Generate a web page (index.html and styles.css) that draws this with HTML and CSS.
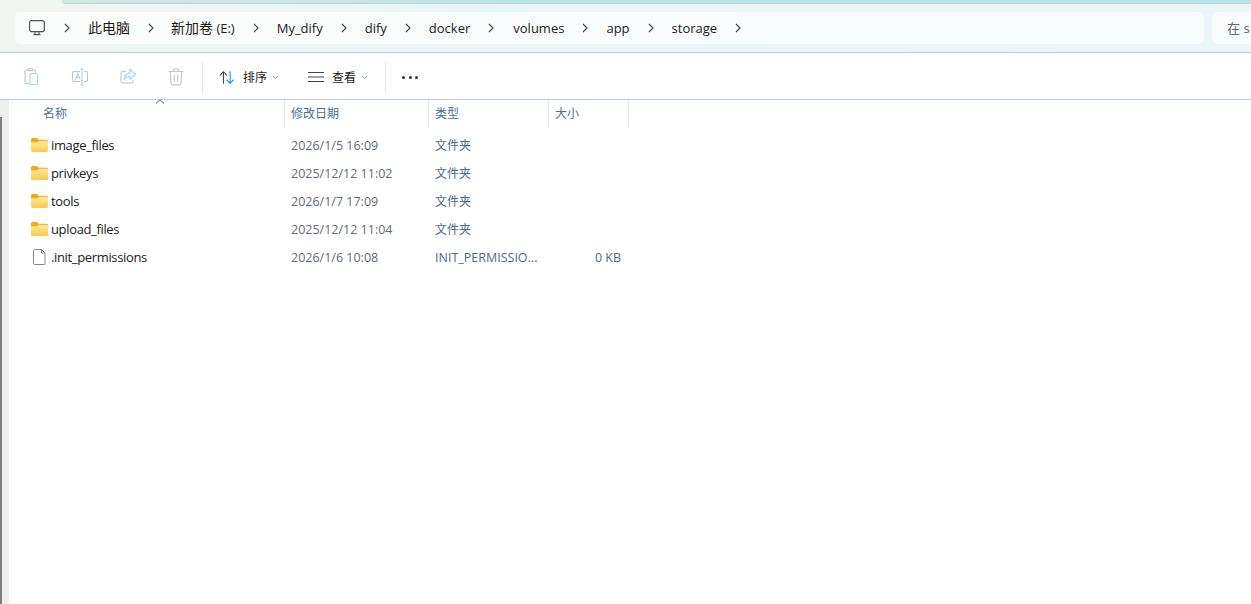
FILE: index.html
```html
<!DOCTYPE html>
<html lang="zh-CN">
<head>
<meta charset="utf-8">
<title>storage</title>
<link rel="stylesheet" href="styles.css">
</head>
<body>
<header class="top">
  <div class="tabedge"></div>
  <div class="bars">
    <nav class="address">
      <svg class="pc" width="18" height="18" viewBox="0 0 18 18" fill="none" stroke="#555" stroke-width="1.2"><rect x="1.6" y="1.6" width="14.8" height="11" rx="2"/><path d="M7 13v2.4M11 13v2.4M5.500 15.600h7"/></svg>
      <svg class="chev first" width="6" height="10" viewBox="0 0 6 10"><path d="M1 1l4 4-4 4" fill="none" stroke="#444" stroke-width="1.1"/></svg>
      <span class="crumb zh">此电脑</span>
      <svg class="chev tight" width="6" height="10" viewBox="0 0 6 10"><path d="M1 1l4 4-4 4" fill="none" stroke="#444" stroke-width="1.1"/></svg>
      <span class="crumb"><span class="zh">新加卷</span> (E:)</span>
      <svg class="chev" width="6" height="10" viewBox="0 0 6 10"><path d="M1 1l4 4-4 4" fill="none" stroke="#444" stroke-width="1.1"/></svg>
      <span class="crumb">My_dify</span>
      <svg class="chev" width="6" height="10" viewBox="0 0 6 10"><path d="M1 1l4 4-4 4" fill="none" stroke="#444" stroke-width="1.1"/></svg>
      <span class="crumb">dify</span>
      <svg class="chev" width="6" height="10" viewBox="0 0 6 10"><path d="M1 1l4 4-4 4" fill="none" stroke="#444" stroke-width="1.1"/></svg>
      <span class="crumb">docker</span>
      <svg class="chev wide" width="6" height="10" viewBox="0 0 6 10"><path d="M1 1l4 4-4 4" fill="none" stroke="#444" stroke-width="1.1"/></svg>
      <span class="crumb">volumes</span>
      <svg class="chev" width="6" height="10" viewBox="0 0 6 10"><path d="M1 1l4 4-4 4" fill="none" stroke="#444" stroke-width="1.1"/></svg>
      <span class="crumb">app</span>
      <svg class="chev" width="6" height="10" viewBox="0 0 6 10"><path d="M1 1l4 4-4 4" fill="none" stroke="#444" stroke-width="1.1"/></svg>
      <span class="crumb">storage</span>
      <svg class="chev" width="6" height="10" viewBox="0 0 6 10"><path d="M1 1l4 4-4 4" fill="none" stroke="#444" stroke-width="1.1"/></svg>
    </nav>
    <div class="search">在 s</div>
  </div>
</header>

<section class="toolbar">
  <div class="tool">
    <svg width="18" height="18" viewBox="0 0 18 18" fill="none" stroke="#c4c4c4" stroke-width="1.1"><path d="M5.500 15.500H3a1 1 0 0 1-1-1V3a1 1 0 0 1 1-1h8.500a1 1 0 0 1 1 1v2.500"/><rect x="5" y=".8" width="5" height="2" rx=".8" fill="#fff"/><rect x="7" y="5.500" width="7.500" height="11" rx="1.500" stroke="#a5d3f3"/></svg>
  </div>
  <div class="tool">
    <svg width="18" height="18" viewBox="0 0 18 18" fill="none" stroke-width="1.1"><path d="M9 3.500H3a1.500 1.500 0 0 0-1.500 1.500v7A1.500 1.500 0 0 0 3 13.500h6M13 3.500h2a1.500 1.500 0 0 1 1.500 1.500v7a1.500 1.500 0 0 1-1.500 1.500h-2" stroke="#c4c4c4"/><path d="M11 1v16M9.200 1h3.600M9.200 17h3.600M4.500 11.500L6.800 5.500l2.300 6M5.300 9.500h3" stroke="#a5d3f3"/></svg>
  </div>
  <div class="tool">
    <svg width="18" height="18" viewBox="0 0 18 18" fill="none" stroke-width="1.1"><path d="M7 3.500H3.500a1.500 1.500 0 0 0-1.500 1.500v8.500A1.500 1.500 0 0 0 3.500 15h9a1.500 1.500 0 0 0 1.500-1.500V12" stroke="#c4c4c4"/><path d="M11 1.500l5.500 4.800-5.500 4.700V8.300C8.500 8.300 6.500 9.500 5 11.500c.3-3.500 2.500-6.200 6-6.600z" stroke="#a5d3f3"/></svg>
  </div>
  <div class="tool">
    <svg width="18" height="18" viewBox="0 0 18 18" fill="none" stroke="#c4c4c4" stroke-width="1.1"><path d="M1.500 3.500h15M6.500 3.500V2a1 1 0 0 1 1-1h3a1 1 0 0 1 1 1v1.500M3.200 3.500l.8 12a1.500 1.500 0 0 0 1.500 1.400h7a1.500 1.500 0 0 0 1.500-1.400l.8-12M7.300 7v6.500M10.700 7v6.500"/></svg>
  </div>
  <div class="divider d1"></div>
  <div class="action sort">
    <svg width="16" height="15" viewBox="0 0 18 16" fill="none" stroke-width="1.2"><path d="M5 15V1.500M1 5.500l4-4 4 4" stroke="#444"/><path d="M12.500 1v13.500M8.500 10.500l4 4 4-4" stroke="#1a86d9"/></svg>
    <span class="alabel">排序</span>
    <svg class="caret" width="7" height="5" viewBox="0 0 7 5"><path d="M.8 1l2.700 2.700L6.200 1" fill="none" stroke="#9a9a9a"/></svg>
  </div>
  <div class="action view">
    <svg width="16" height="10" viewBox="0 0 16 10" fill="none" stroke="#444" stroke-width="1"><path d="M0 .5h16M0 5h16M0 9.500h16"/></svg>
    <span class="alabel">查看</span>
    <svg class="caret" width="7" height="5" viewBox="0 0 7 5"><path d="M.8 1l2.700 2.700L6.200 1" fill="none" stroke="#9a9a9a"/></svg>
  </div>
  <div class="divider d2"></div>
  <div class="more"><i></i><i></i><i></i></div>
</section>

<main class="content">
  <aside class="gutter"><div class="scroll"></div></aside>
  <div class="pane">
    <div class="columns">
      <div class="col name">名称<svg class="sortup" width="10" height="5" viewBox="0 0 10 5"><path d="M1 4.500L5 .8l4 3.700" fill="none" stroke="#555"/></svg></div>
      <div class="col date">修改日期</div>
      <div class="col type">类型</div>
      <div class="col size">大小</div>
    </div>
    <div class="rows">
      <div class="row">
        <div class="cell name"><svg class="folder" width="17" height="14" viewBox="0 0 17 14"><use href="#fold"/></svg>image_files</div>
        <div class="cell date">2026/1/5 16:09</div><div class="cell type zh12">文件夹</div><div class="cell size"></div>
      </div>
      <div class="row">
        <div class="cell name"><svg class="folder" width="17" height="14" viewBox="0 0 17 14"><use href="#fold"/></svg>privkeys</div>
        <div class="cell date">2025/12/12 11:02</div><div class="cell type zh12">文件夹</div><div class="cell size"></div>
      </div>
      <div class="row">
        <div class="cell name"><svg class="folder" width="17" height="14" viewBox="0 0 17 14"><use href="#fold"/></svg>tools</div>
        <div class="cell date">2026/1/7 17:09</div><div class="cell type zh12">文件夹</div><div class="cell size"></div>
      </div>
      <div class="row">
        <div class="cell name"><svg class="folder" width="17" height="14" viewBox="0 0 17 14"><use href="#fold"/></svg>upload_files</div>
        <div class="cell date">2025/12/12 11:04</div><div class="cell type zh12">文件夹</div><div class="cell size"></div>
      </div>
      <div class="row">
        <div class="cell name"><svg class="file" width="17" height="16" viewBox="0 0 17 16" fill="#fff" stroke="#8a8a8a"><path d="M3.500.5h7l3.500 3.500v10.500a1 1 0 0 1-1 1h-9.500a1 1 0 0 1-1-1V1.500a1 1 0 0 1 1-1z"/><path d="M10.500.5v3.500H14" fill="none"/></svg>.init_permissions</div>
        <div class="cell date">2026/1/6 10:08</div><div class="cell type">INIT_PERMISSIO...</div><div class="cell size">0 KB</div>
      </div>
    </div>
  </div>
</main>

<svg class="defs" width="0" height="0">
  <defs>
    <linearGradient id="fg" x1="0" y1="0" x2="0" y2="1"><stop offset="0" stop-color="#ffeaa3"/><stop offset="1" stop-color="#fcc94a"/></linearGradient>
    <g id="fold">
      <path d="M1.500 0h4.300l1.700 1.800h8A1.500 1.500 0 0 1 17 3.300V6H0V1.500A1.500 1.500 0 0 1 1.500 0z" fill="#f4a90c"/>
      <path d="M0 4.300l6.200 0 1.800-1.500h7.500A1.500 1.500 0 0 1 17 4.300v8.200a1.500 1.500 0 0 1-1.500 1.500h-14A1.500 1.500 0 0 1 0 12.500z" fill="url(#fg)"/>
    </g>
  </defs>
</svg>
</body>
</html>
```

FILE: styles.css
```css
* { box-sizing: border-box; }
html, body { margin: 0; height: 100%; overflow: hidden; background: #fff; }
body {
  width: 1251px;
  height: 604px;
  font-family: "Open Sans", "Noto Sans CJK SC", sans-serif;
  font-size: 13px;
  color: #1a1a1a;
  display: flex;
  flex-direction: column;
}
.top {
  height: 53px;
  flex: none;
  background: linear-gradient(90deg, #f1f5f1 0%, #ebf5f6 40%, #eaf5f8 100%);
  border-bottom: 1px solid #b0d3dc;
}
.tabedge {
  height: 4px;
  margin-left: 62px;
  background: linear-gradient(90deg, #d6e6de 0%, #bfe2e8 40%, #bfe2e8 100%);
  border-bottom: 1px solid #b4d8e0;
  border-bottom-left-radius: 5px;
}
.bars {
  display: flex;
  gap: 8px;
  padding: 8px 0 0 15px;
}
.address {
  width: 1189px;
  height: 32px;
  background: linear-gradient(90deg, #fafcfb, #f8fcfd);
  border-radius: 5px;
  display: flex;
  align-items: center;
  padding-left: 13px;
  white-space: nowrap;
}
.pc { flex: none; }
.chev { flex: none; margin: 0 18px; }
.chev.first { margin-left: 18px; }
.chev.tight { margin-right: 17px; }
.chev.wide { margin-right: 19px; }
.crumb { line-height: 32px; }
.zh { font-size: 14px; }
.search {
  flex: 1;
  height: 32px;
  background: #f8fcfd;
  border-radius: 5px 0 0 5px;
  padding-left: 15px;
  line-height: 32px;
  color: #666;
  white-space: nowrap;
  overflow: hidden;
}
.toolbar {
  height: 47px;
  flex: none;
  display: flex;
  align-items: center;
  padding: 2px 0 0 23px;
  border-bottom: 1px solid #b8d0d8;
  background: #fff;
}
.tool { width: 48px; display: flex; align-items: center; }
.divider { width: 1px; height: 32px; background: #e8e8e8; }
.d1 { margin-left: -13px; }
.action { display: flex; align-items: center; }
.sort { margin-left: 16px; width: 89px; }
.view { width: 77px; }
.alabel { margin-left: 8px; font-size: 12px; }
.caret { margin-left: 5px; }
.more { display: flex; gap: 3.5px; margin-left: 16px; }
.more i { width: 3px; height: 3px; border-radius: 50%; background: #333; }
.content { flex: 1; display: flex; min-height: 0; }
.gutter { width: 9px; flex: none; background: #eeeeee; padding-top: 17px; }
.scroll { width: 2px; height: 100%; background: #7d7d7d; }
.pane { flex: 1; border-left: 1px solid #f4f4f4; margin-left: 2px; }
.columns { display: flex; height: 27px; position: relative; }
.col {
  font-size: 12px;
  color: #4d6f90;
  line-height: 28px;
  padding-left: 6px;
  border-right: 1px solid #e5e5e5;
  position: relative;
}
.col.name { width: 273px; padding-left: 31px; }
.col.date { width: 144px; }
.col.type { width: 120px; }
.col.size { width: 80px; }
.sortup { position: absolute; left: 143px; top: -1px; }
.rows { padding-top: 4px; }
.row { display: flex; height: 28px; align-items: center; }
.cell { white-space: nowrap; font-size: 12.5px; color: #5f6b78; padding-left: 6px; }
.cell.zh12 { font-size: 12px; }
.cell.name {
  width: 273px;
  display: flex;
  align-items: center;
  padding-left: 19px;
  font-size: 13px;
  letter-spacing: -0.35px;
  color: #1a1a1a;
}
.folder, .file { margin-right: 3px; flex: none; }
.cell.date { width: 144px; }
.cell.type { width: 120px; color: #4f6a88; }
.cell.size { width: 80px; text-align: right; padding-right: 8px; color: #4f6a88; }
.defs { position: absolute; }
```
